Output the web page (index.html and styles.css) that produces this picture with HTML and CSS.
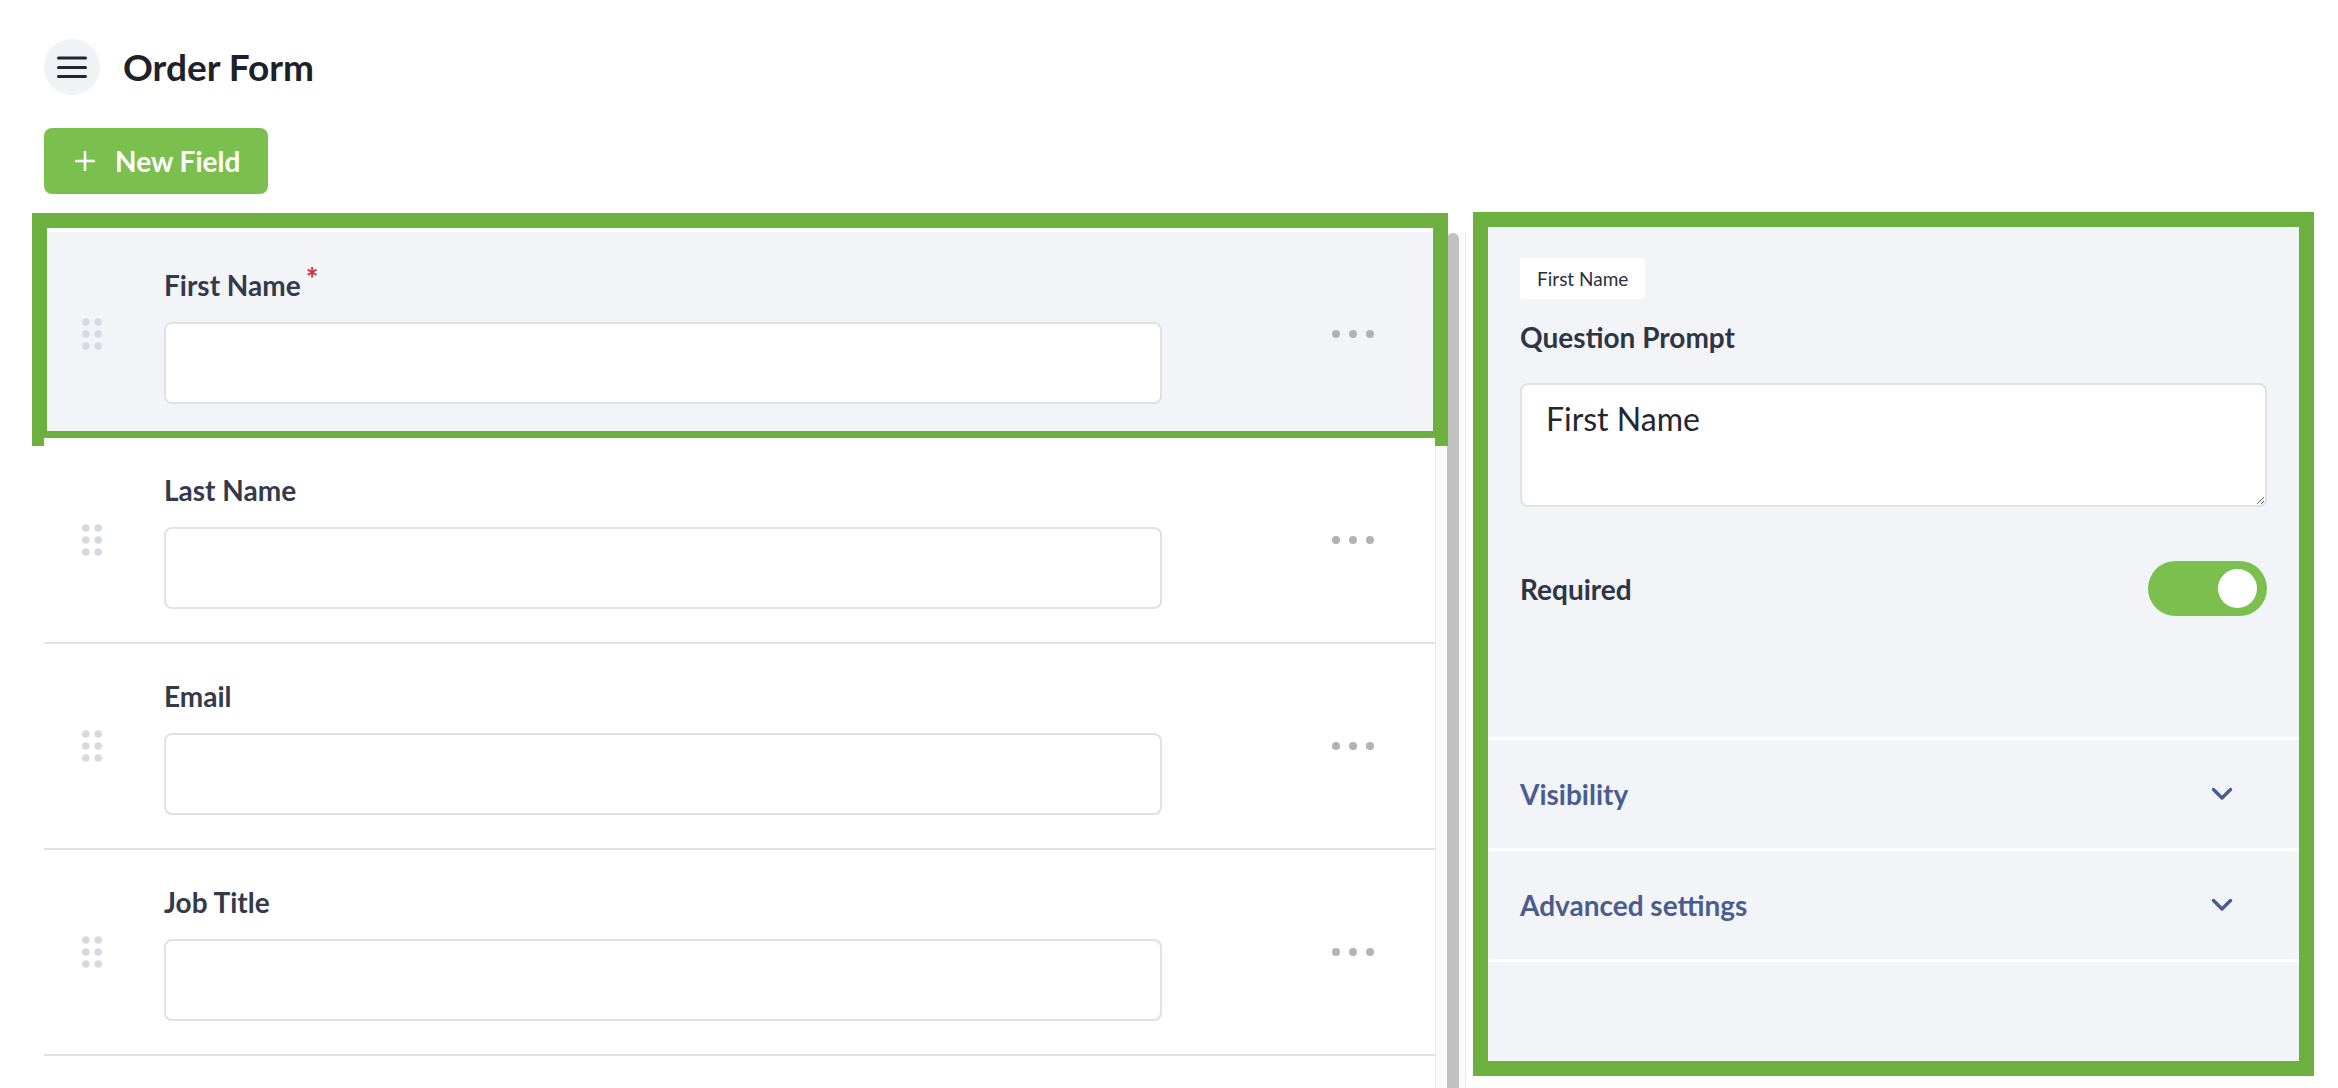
FILE: index.html
```html
<!DOCTYPE html>
<html lang="en">
<head>
<meta charset="utf-8">
<title>Order Form</title>
<link rel="stylesheet" href="styles.css">
</head>
<body>
<div class="app">
  <header class="topbar">
    <button class="menu-btn" aria-label="Menu">
      <svg width="30" height="24" viewBox="0 0 30 24"><path d="M1.5 3h27M1.5 12.5h27M1.5 21.5h27" stroke="#22252e" stroke-width="3" stroke-linecap="round" fill="none"/></svg>
    </button>
    <h1 class="page-title">Order Form</h1>
  </header>

  <div class="toolbar">
    <button class="btn-new">
      <svg width="20" height="20" viewBox="0 0 20 20"><path d="M10 1v18M1 10h18" stroke="#fff" stroke-width="2.6" stroke-linecap="round" fill="none"/></svg>
      <span>New Field</span>
    </button>
  </div>

  <main class="workspace">
    <section class="list-wrap">
      <div class="field-list">
        <div class="field-row is-selected">
          <span class="drag-handle"><svg width="20" height="32" viewBox="0 0 20 32"><g fill="#d6d9e0"><circle cx="3.8" cy="4" r="3.8"/><circle cx="16.2" cy="4" r="3.8"/><circle cx="3.8" cy="16" r="3.8"/><circle cx="16.2" cy="16" r="3.8"/><circle cx="3.8" cy="28" r="3.8"/><circle cx="16.2" cy="28" r="3.8"/></g></svg></span>
          <div class="field-body">
            <label class="field-label">First Name<span class="req">*</span></label>
            <input class="field-input" type="text">
          </div>
          <span class="more"><svg width="42" height="8" viewBox="0 0 42 8"><g fill="#b2b2b2"><circle cx="4" cy="4" r="4"/><circle cx="21" cy="4" r="4"/><circle cx="38" cy="4" r="4"/></g></svg></span>
        </div>
        <div class="field-row">
          <span class="drag-handle"><svg width="20" height="32" viewBox="0 0 20 32"><g fill="#d6d9e0"><circle cx="3.8" cy="4" r="3.8"/><circle cx="16.2" cy="4" r="3.8"/><circle cx="3.8" cy="16" r="3.8"/><circle cx="16.2" cy="16" r="3.8"/><circle cx="3.8" cy="28" r="3.8"/><circle cx="16.2" cy="28" r="3.8"/></g></svg></span>
          <div class="field-body">
            <label class="field-label">Last Name</label>
            <input class="field-input" type="text">
          </div>
          <span class="more"><svg width="42" height="8" viewBox="0 0 42 8"><g fill="#b2b2b2"><circle cx="4" cy="4" r="4"/><circle cx="21" cy="4" r="4"/><circle cx="38" cy="4" r="4"/></g></svg></span>
        </div>
        <div class="field-row">
          <span class="drag-handle"><svg width="20" height="32" viewBox="0 0 20 32"><g fill="#d6d9e0"><circle cx="3.8" cy="4" r="3.8"/><circle cx="16.2" cy="4" r="3.8"/><circle cx="3.8" cy="16" r="3.8"/><circle cx="16.2" cy="16" r="3.8"/><circle cx="3.8" cy="28" r="3.8"/><circle cx="16.2" cy="28" r="3.8"/></g></svg></span>
          <div class="field-body">
            <label class="field-label">Email</label>
            <input class="field-input" type="text">
          </div>
          <span class="more"><svg width="42" height="8" viewBox="0 0 42 8"><g fill="#b2b2b2"><circle cx="4" cy="4" r="4"/><circle cx="21" cy="4" r="4"/><circle cx="38" cy="4" r="4"/></g></svg></span>
        </div>
        <div class="field-row">
          <span class="drag-handle"><svg width="20" height="32" viewBox="0 0 20 32"><g fill="#d6d9e0"><circle cx="3.8" cy="4" r="3.8"/><circle cx="16.2" cy="4" r="3.8"/><circle cx="3.8" cy="16" r="3.8"/><circle cx="16.2" cy="16" r="3.8"/><circle cx="3.8" cy="28" r="3.8"/><circle cx="16.2" cy="28" r="3.8"/></g></svg></span>
          <div class="field-body">
            <label class="field-label">Job Title</label>
            <input class="field-input" type="text">
          </div>
          <span class="more"><svg width="42" height="8" viewBox="0 0 42 8"><g fill="#b2b2b2"><circle cx="4" cy="4" r="4"/><circle cx="21" cy="4" r="4"/><circle cx="38" cy="4" r="4"/></g></svg></span>
        </div>
      </div>
      <div class="scrollbar"><div class="thumb"></div></div>
    </section>

    <aside class="inspector">
      <div class="settings">
        <span class="tag">First Name</span>
        <div class="setting-label">Question Prompt</div>
        <textarea class="prompt">First Name</textarea>
        <div class="toggle-row">
          <span class="setting-label">Required</span>
          <span class="toggle"><span class="knob"></span></span>
        </div>
      </div>
      <div class="accordion-item">
        <span>Visibility</span>
        <svg width="22" height="14" viewBox="0 0 22 14"><path d="M2.5 2.5l8.5 8.5 8.5-8.5" stroke="#4a5d8f" stroke-width="3.4" stroke-linecap="round" stroke-linejoin="round" fill="none"/></svg>
      </div>
      <div class="accordion-item">
        <span>Advanced settings</span>
        <svg width="22" height="14" viewBox="0 0 22 14"><path d="M2.5 2.5l8.5 8.5 8.5-8.5" stroke="#4a5d8f" stroke-width="3.4" stroke-linecap="round" stroke-linejoin="round" fill="none"/></svg>
      </div>
    </aside>
  </main>
</div>
</body>
</html>
```

FILE: styles.css
```css
* { box-sizing: border-box; }

html, body {
  margin: 0;
  padding: 0;
  height: 100%;
  overflow: hidden;
  background: #ffffff;
}

body {
  font-family: Lato, "Open Sans", "Liberation Sans", sans-serif;
  color: #2f3546;
}

.app {
  padding-left: 44px;
}

/* Header */
.topbar {
  display: flex;
  align-items: center;
  gap: 23px;
  padding-top: 39px;
  height: 95px;
}

.menu-btn {
  width: 56px;
  height: 56px;
  border-radius: 50%;
  border: none;
  background: #f1f2f6;
  display: flex;
  align-items: center;
  justify-content: center;
  padding: 0;
}

.page-title {
  margin: 0;
  font-size: 37px;
  font-weight: 700;
  color: #1f2129;
  line-height: 44px;
}

.toolbar {
  margin-top: 33px;
}

.btn-new {
  display: inline-flex;
  align-items: center;
  gap: 20px;
  height: 66px;
  width: 224px;
  padding: 0 0 0 31px;
  border: none;
  border-radius: 8px;
  background: #7bc04f;
  color: #ffffff;
  font-family: Lato, sans-serif;
  font-size: 28px;
  font-weight: 700;
}

/* Workspace */
.workspace {
  display: flex;
  align-items: flex-start;
  gap: 7px;
  margin-top: 18px;
}

.list-wrap {
  display: flex;
  width: 1422px;
  margin-top: 20px;
  height: 900px;
}

.field-list {
  width: 1391px;
  flex: none;
}

.field-row {
  position: relative;
  display: flex;
  align-items: center;
  height: 206px;
  padding: 0 61px 0 38px;
  border-bottom: 2px solid #dfe1e6;
  background: #ffffff;
}

.field-row.is-selected {
  background: #f3f4f8;
}

.field-row.is-selected::after {
  content: "";
  position: absolute;
  top: -19px;
  left: -12px;
  right: -13px;
  bottom: -10px;
  border: 15px solid #6cb13f;
  pointer-events: none;
}

.drag-handle {
  width: 20px;
  height: 32px;
  display: flex;
  flex: none;
}

.field-body {
  flex: 1;
  margin-left: 62px;
  margin-right: 170px;
  padding-top: 2px;
}

.field-label {
  display: block;
  font-size: 28px;
  font-weight: 700;
  line-height: 34px;
  color: #333a4c;
}

.req {
  color: #d0312d;
  font-size: 30px;
  margin-left: 5px;
  position: relative;
  top: -6px;
}

.field-input {
  display: block;
  width: 100%;
  height: 82px;
  margin-top: 20px;
  border: 2px solid #dfe1e7;
  border-radius: 8px;
  background: #ffffff;
  outline: none;
}

.more {
  width: 42px;
  height: 8px;
  display: flex;
  flex: none;
}

/* Scrollbar */
.scrollbar {
  width: 31px;
  flex: none;
  background: #fafafa;
  border-left: 1px solid #ececec;
  border-right: 1px solid #ececec;
  padding-left: 11px;
}

.thumb {
  width: 12px;
  height: 1000px;
  margin-top: 1px;
  border-radius: 6px;
  background: #c1c1c1;
}

/* Inspector */
.inspector {
  width: 841px;
  height: 864px;
  border: 15px solid #6cb13f;
  background: #f3f4f8;
  flex: none;
}

.settings {
  padding: 31px 32px 121px;
  border-bottom: 3px solid #ffffff;
}

.tag {
  display: inline-block;
  height: 41px;
  line-height: 41px;
  padding: 0 17px;
  background: #ffffff;
  border-radius: 4px;
  font-size: 19px;
  color: #2b2f3a;
}

.setting-label {
  display: block;
  margin-top: 21px;
  font-size: 28px;
  font-weight: 700;
  line-height: 34px;
  color: #2f3546;
}

.prompt {
  display: block;
  width: 100%;
  height: 124px;
  margin-top: 29px;
  padding: 15px 24px;
  border: 2px solid #dfe1e7;
  border-radius: 8px;
  background: #ffffff;
  font-family: Lato, sans-serif;
  font-size: 32px;
  line-height: 38px;
  color: #23262e;
  outline: none;
}

.toggle-row {
  display: flex;
  align-items: center;
  justify-content: space-between;
  height: 55px;
  margin-top: 54px;
}

.toggle-row .setting-label {
  margin-top: 0;
}

.toggle {
  width: 119px;
  height: 55px;
  border-radius: 28px;
  background: #7bc04f;
  display: flex;
  align-items: center;
  justify-content: flex-end;
  padding-right: 10px;
}

.knob {
  width: 39px;
  height: 39px;
  border-radius: 50%;
  background: #ffffff;
}

.accordion-item {
  display: flex;
  align-items: center;
  justify-content: space-between;
  height: 111px;
  padding: 0 66px 0 32px;
  border-bottom: 3px solid #ffffff;
  font-size: 28px;
  font-weight: 700;
  color: #4a5d8f;
}
```
